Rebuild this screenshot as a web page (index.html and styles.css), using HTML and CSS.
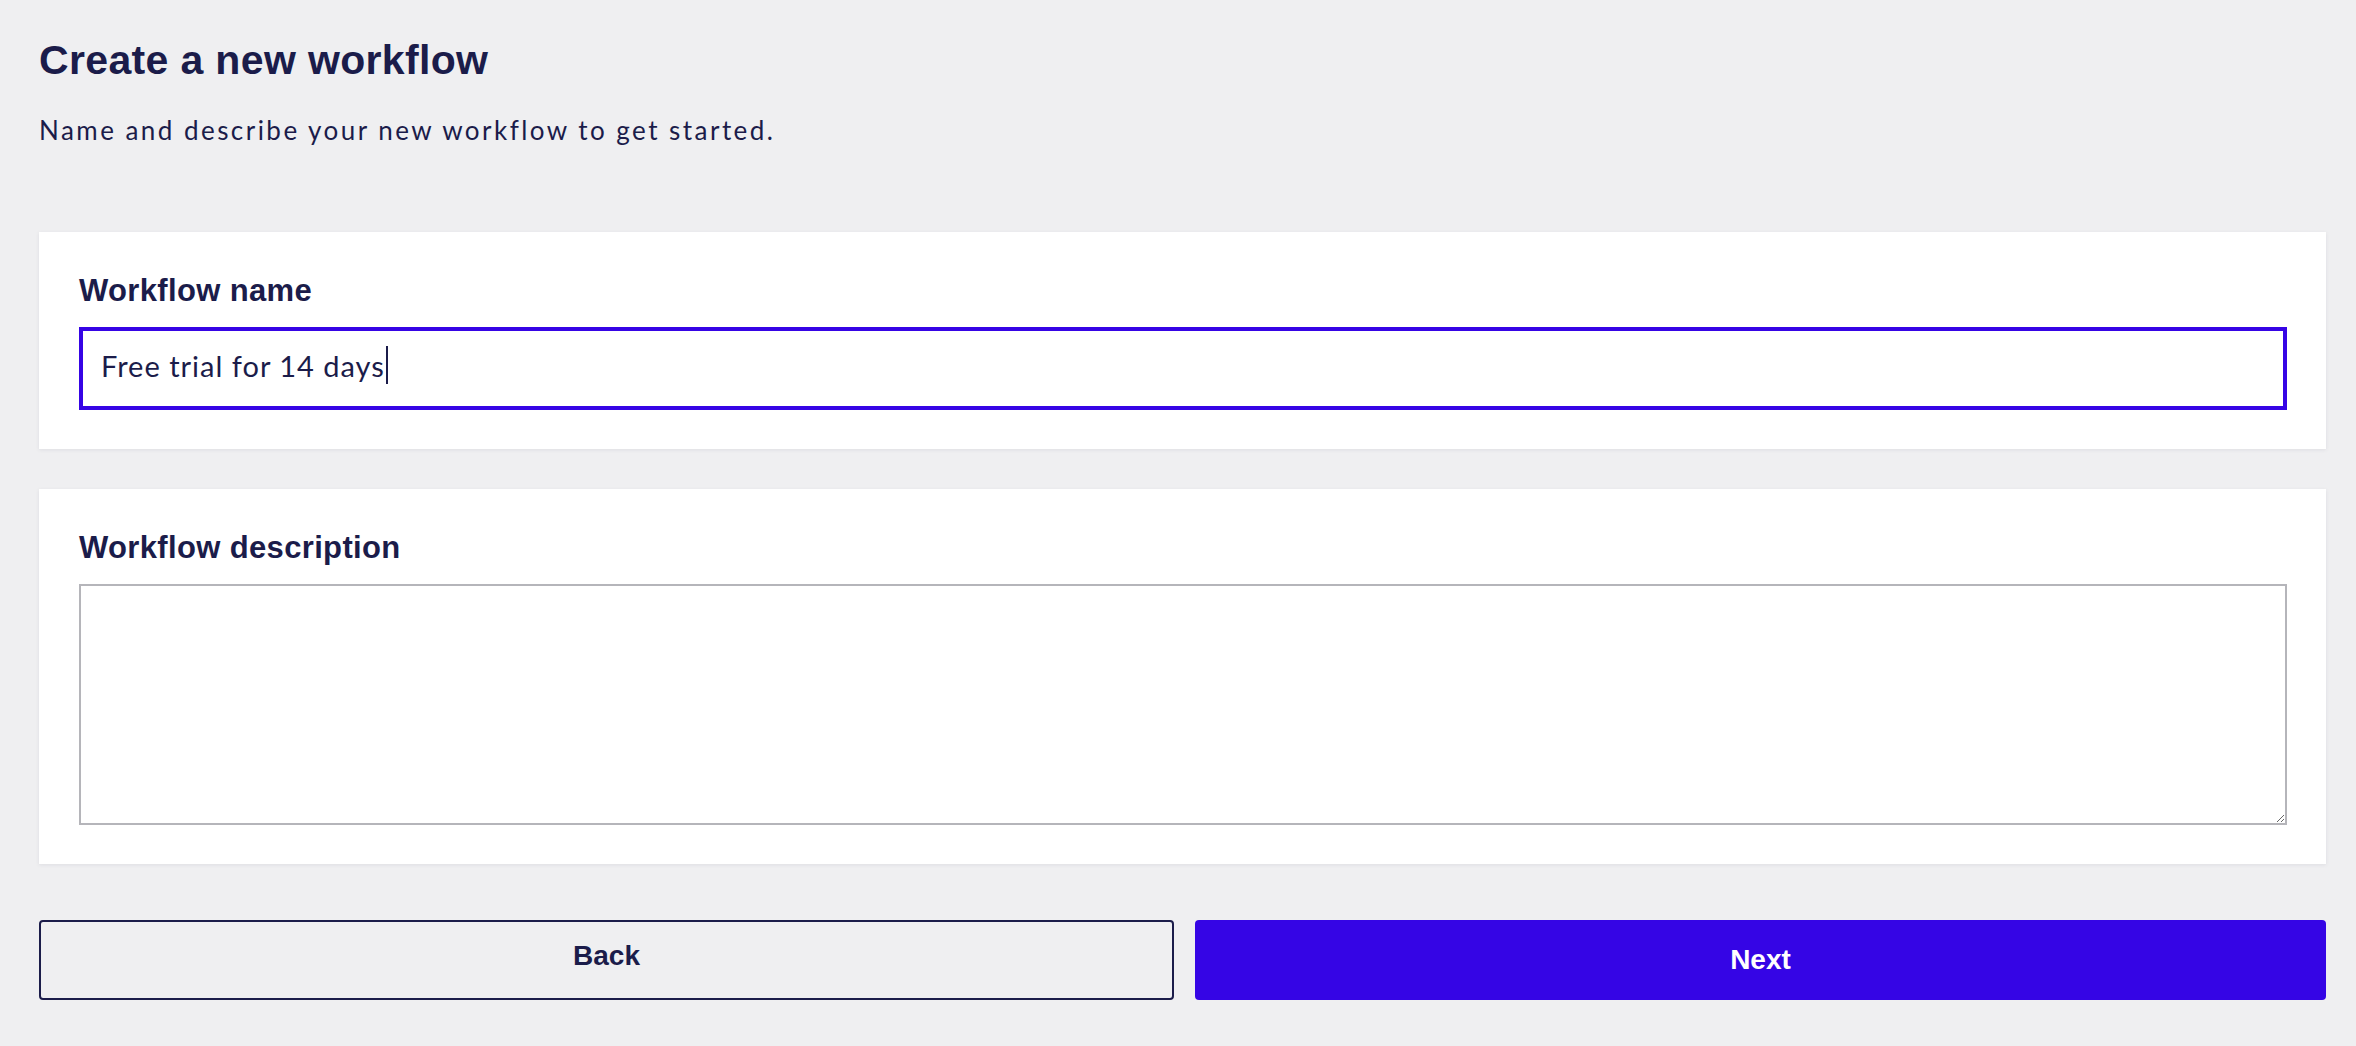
FILE: index.html
```html
<!DOCTYPE html>
<html lang="en">
<head>
<meta charset="utf-8">
<title>Create a new workflow</title>
<link rel="stylesheet" href="styles.css">
</head>
<body>
<main class="page">
  <header class="intro">
    <h1 class="title">Create a new workflow</h1>
    <p class="subtitle">Name and describe your new workflow to get started.</p>
  </header>

  <section class="card">
    <label class="field-label" for="wf-name">Workflow name</label>
    <div class="text-input is-focused" id="wf-name" role="textbox">Free trial for 14 days<span class="caret"></span></div>
  </section>

  <section class="card">
    <label class="field-label" for="wf-desc">Workflow description</label>
    <textarea class="text-area" id="wf-desc"></textarea>
  </section>

  <div class="actions">
    <button class="btn btn-back" type="button">Back</button>
    <button class="btn btn-next" type="button">Next</button>
  </div>
</main>
</body>
</html>
```

FILE: styles.css
```css
html, body {
  margin: 0;
  padding: 0;
  background: #efeff1;
}

body {
  color: #1b1c4a;
  font-family: "Liberation Sans", Arial, sans-serif;
}

.page {
  padding: 36px 30px 0 39px;
  display: flex;
  flex-direction: column;
}

.intro {
  display: flex;
  flex-direction: column;
}

.title {
  margin: 0;
  font-family: "Liberation Sans", Arial, sans-serif;
  font-weight: 700;
  font-size: 41px;
  line-height: 48px;
  letter-spacing: 0.35px;
  color: #1b1c4a;
}

.subtitle {
  margin: 31px 0 0 0;
  font-family: Lato, "Open Sans", sans-serif;
  font-size: 26px;
  line-height: 30px;
  letter-spacing: 2.46px;
  color: #1b1c4a;
}

.card {
  margin-top: 40px;
  background: #ffffff;
  padding: 41px 39px 39px 40px;
  box-shadow: 0 1px 4px rgba(20, 20, 60, 0.08);
  display: flex;
  flex-direction: column;
}

.intro + .card {
  margin-top: 87px;
}

.field-label {
  font-family: "Liberation Sans", Arial, sans-serif;
  font-weight: 700;
  font-size: 31px;
  line-height: 36px;
  letter-spacing: 0.35px;
  color: #1b1c4a;
  margin-bottom: 18px;
}

.text-input {
  box-sizing: border-box;
  height: 83px;
  border: 4px solid #3604e5;
  padding: 0 18px 6px 18px;
  display: flex;
  align-items: center;
  font-family: Lato, "Open Sans", sans-serif;
  font-size: 29px;
  letter-spacing: 1px;
  color: #1b1c4a;
  background: #ffffff;
}

.caret {
  display: inline-block;
  width: 2px;
  height: 38px;
  margin-left: 1px;
  margin-bottom: 2px;
  background: #1b1c4a;
}

.text-area {
  display: block;
  box-sizing: border-box;
  width: 100%;
  height: 241px;
  margin: 0;
  border: 2px solid #b5b5ba;
  border-radius: 0;
  background: #ffffff;
  font-family: Lato, "Open Sans", sans-serif;
  font-size: 28px;
  outline: none;
  resize: vertical;
}

.actions {
  margin-top: 56px;
  display: flex;
  gap: 21px;
}

.btn {
  flex: 1 1 0;
  height: 80px;
  border-radius: 4px;
  font-family: "Liberation Sans", Arial, sans-serif;
  font-weight: 700;
  font-size: 28px;
  cursor: pointer;
}

.btn-back {
  background: transparent;
  border: 2px solid #1b1c4a;
  color: #1b1c4a;
  padding: 0 0 8px 0;
}

.btn-next {
  background: #3505e5;
  border: none;
  color: #ffffff;
  padding: 0;
}
```
